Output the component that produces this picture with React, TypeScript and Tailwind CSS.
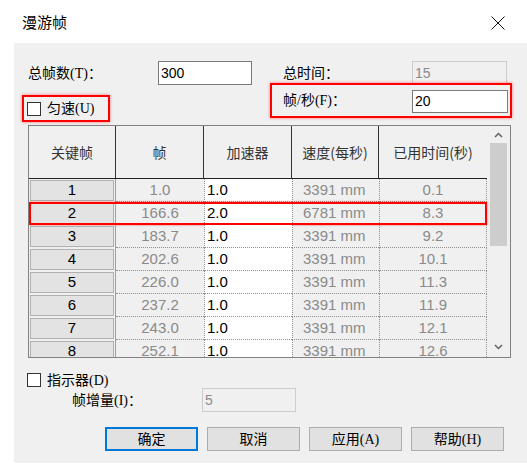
import React from 'react';

// ─── fonts ────────────────────────────────────────────────────────────────────

const UI = { fontFamily: '"Liberation Serif", "Noto Sans CJK SC", serif' };
const SANS = { fontFamily: '"Noto Sans CJK SC", "Noto Sans", sans-serif' };
const NUM = { fontFamily: '"Liberation Sans", "Noto Sans CJK SC", sans-serif' };

// ─── data ─────────────────────────────────────────────────────────────────────

const ROWS = [
    { key: '1', frame: '1.0', accel: '1.0', speed: '3391 mm', time: '0.1' },
    { key: '2', frame: '166.6', accel: '2.0', speed: '6781 mm', time: '8.3' },
    { key: '3', frame: '183.7', accel: '1.0', speed: '3391 mm', time: '9.2' },
    { key: '4', frame: '202.6', accel: '1.0', speed: '3391 mm', time: '10.1' },
    { key: '5', frame: '226.0', accel: '1.0', speed: '3391 mm', time: '11.3' },
    { key: '6', frame: '237.2', accel: '1.0', speed: '3391 mm', time: '11.9' },
    { key: '7', frame: '243.0', accel: '1.0', speed: '3391 mm', time: '12.1' },
    { key: '8', frame: '252.1', accel: '1.0', speed: '3391 mm', time: '12.6' },
];

// ─── bits ─────────────────────────────────────────────────────────────────────

function TextBox({ value, disabled = false, className = '' }: { value: string; disabled?: boolean; className?: string }) {
    return (
        <div
            className={`flex items-center pl-[2px] text-[14px] border ${
                disabled ? 'border-[#cccccc] bg-[#f0f0f0] text-[#8a8a8a]' : 'border-[#7a7a7a] bg-white text-black'
            } ${className}`}
            style={NUM}
        >
            {value}
        </div>
    );
}

function CheckBox() {
    return <div className="w-[14px] h-[14px] border border-[#333333] bg-white shrink-0" />;
}

function Button({ label, primary = false }: { label: string; primary?: boolean }) {
    return (
        <div
            className={`w-[93px] h-[24px] flex items-center justify-center text-[14px] text-black bg-[#e1e1e1] ${
                primary ? 'border-2 border-[#0078d7]' : 'border border-[#adadad]'
            }`}
            style={UI}
        >
            {label}
        </div>
    );
}

function ChevronUp() {
    return (
        <svg width="9" height="6" viewBox="0 0 9 6" fill="none" stroke="#606060" strokeWidth="1.5">
            <path d="M1 5l3.5-3.5L8 5" />
        </svg>
    );
}

function ChevronDown() {
    return (
        <svg width="9" height="6" viewBox="0 0 9 6" fill="none" stroke="#606060" strokeWidth="1.5">
            <path d="M1 1l3.5 3.5L8 1" />
        </svg>
    );
}

// ─── table ────────────────────────────────────────────────────────────────────

const HEAD = [
    { label: '关键帧', w: 'w-[87px]' },
    { label: '帧', w: 'w-[88px]' },
    { label: '加速器', w: 'w-[88px]' },
    { label: '速度(每秒)', w: 'w-[87px]' },
    { label: '已用时间(秒)', w: 'w-[108px]' },
];

function KeyframeTable() {
    return (
        <div className="ml-[14px] mt-[2px] w-[483px] h-[233px] flex border border-[#828282] bg-[#f0f0f0] overflow-hidden">
            <div className="flex flex-col w-[458px]">
                {/* header */}
                <div className="flex h-[53px] shrink-0 border-b border-[#222222]">
                    {HEAD.map((h, i) => (
                        <div
                            key={h.label}
                            className={`${h.w} flex items-center justify-center text-[14px] text-[#333333] ${
                                i < HEAD.length - 1 ? 'border-r border-[#333333]' : ''
                            }`}
                            style={SANS}
                        >
                            {h.label}
                        </div>
                    ))}
                </div>

                {/* rows */}
                <div className="flex flex-col">
                    {ROWS.map((r) => (
                        <div key={r.key} className="relative flex h-[23px] shrink-0 text-[15px]" style={NUM}>
                            <div className="w-[87px] p-[1px] border-r border-[#a0a0a0]">
                                <div className="h-full flex items-center justify-center bg-[#e3e3e3] border border-[#b0b0b0] text-black">
                                    {r.key}
                                </div>
                            </div>
                            <div className="w-[88px] flex items-center justify-center text-[#8a8a8a] border-b border-dotted border-[#909090]">
                                {r.frame}
                            </div>
                            <div className="w-[88px] flex items-center pl-[2px] bg-white text-black border-l border-b border-dotted border-[#909090]">
                                {r.accel}
                            </div>
                            <div className="w-[87px] flex items-center pl-[10px] text-[#8a8a8a] border-l border-b border-dotted border-[#909090]">
                                {r.speed}
                            </div>
                            <div className="w-[108px] flex items-center justify-center text-[#8a8a8a] border-l border-r border-b border-dotted border-[#909090]">
                                {r.time}
                            </div>
                            {r.key === '2' && (
                                <div className="absolute inset-0 border-2 border-[#ff0000] shadow-[0_0_2px_rgba(255,0,0,0.6)] pointer-events-none" />
                            )}
                        </div>
                    ))}
                </div>
            </div>

            {/* scrollbar */}
            <div className="flex-1 flex flex-col items-center bg-[#f0f0f0]">
                <div className="h-[17px] flex items-center justify-center">
                    <ChevronUp />
                </div>
                <div className="w-[17px] h-[103px] bg-[#cdcdcd]" />
                <div className="flex-1" />
                <div className="h-[20px] flex items-center justify-center">
                    <ChevronDown />
                </div>
            </div>
        </div>
    );
}

// ─── dialog ───────────────────────────────────────────────────────────────────

export default function App() {
    return (
        <div className="w-[527px] h-[471px] bg-white overflow-hidden text-black" style={UI}>
            {/* title bar */}
            <div className="h-[43px] flex items-center justify-between pl-[22px] pr-[22px] pt-[2px]">
                <span className="text-[15px] text-black" style={SANS}>漫游帧</span>
                <svg width="14" height="14" viewBox="0 0 14 14" stroke="#111111" strokeWidth="1">
                    <path d="M0.5 0.5l13 13M13.5 0.5l-13 13" />
                </svg>
            </div>

            {/* body */}
            <div className="ml-[14px] h-[420px] bg-[#f0f0f0] pt-[18px] text-[14px]">
                {/* row 1 */}
                <div className="flex items-center h-[24px]">
                    <span className="w-[144px] pl-[14px]">总帧数(T)：</span>
                    <TextBox value="300" className="w-[94px] h-[24px]" />
                    <span className="ml-[31px] w-[129px]">总时间：</span>
                    <TextBox value="15" disabled className="w-[95px] h-[24px]" />
                </div>

                {/* row 2 */}
                <div className="flex items-start h-[40px] -mt-[2px]">
                    <div className="ml-[8px] mt-[12px] w-[88px] h-[27px] flex items-center gap-[6px] pl-[3px] border-2 border-[#ff0000] shadow-[0_0_3px_rgba(255,0,0,0.5)]">
                        <CheckBox />
                        <span>匀速(U)</span>
                    </div>
                    <div className="ml-[160px] w-[242px] h-[35px] flex items-center border-2 border-[#ff0000] shadow-[0_0_3px_rgba(255,0,0,0.5)]">
                        <span className="w-[140px] pl-[11px]">帧/秒(F)：</span>
                        <TextBox value="20" className="w-[96px] h-[23px] mt-[2px]" />
                    </div>
                </div>

                <KeyframeTable />

                {/* indicator */}
                <div className="flex items-center gap-[6px] ml-[13px] mt-[14px] h-[16px]">
                    <CheckBox />
                    <span>指示器(D)</span>
                </div>
                <div className="flex items-center h-[24px]">
                    <span className="w-[188px] pl-[58px]">帧增量(I)：</span>
                    <TextBox value="5" disabled className="w-[94px] h-[24px]" />
                </div>

                {/* buttons */}
                <div className="flex gap-[9px] ml-[91px] mt-[15px]">
                    <Button label="确定" primary />
                    <Button label="取消" />
                    <Button label="应用(A)" />
                    <Button label="帮助(H)" />
                </div>
            </div>
        </div>
    );
}
